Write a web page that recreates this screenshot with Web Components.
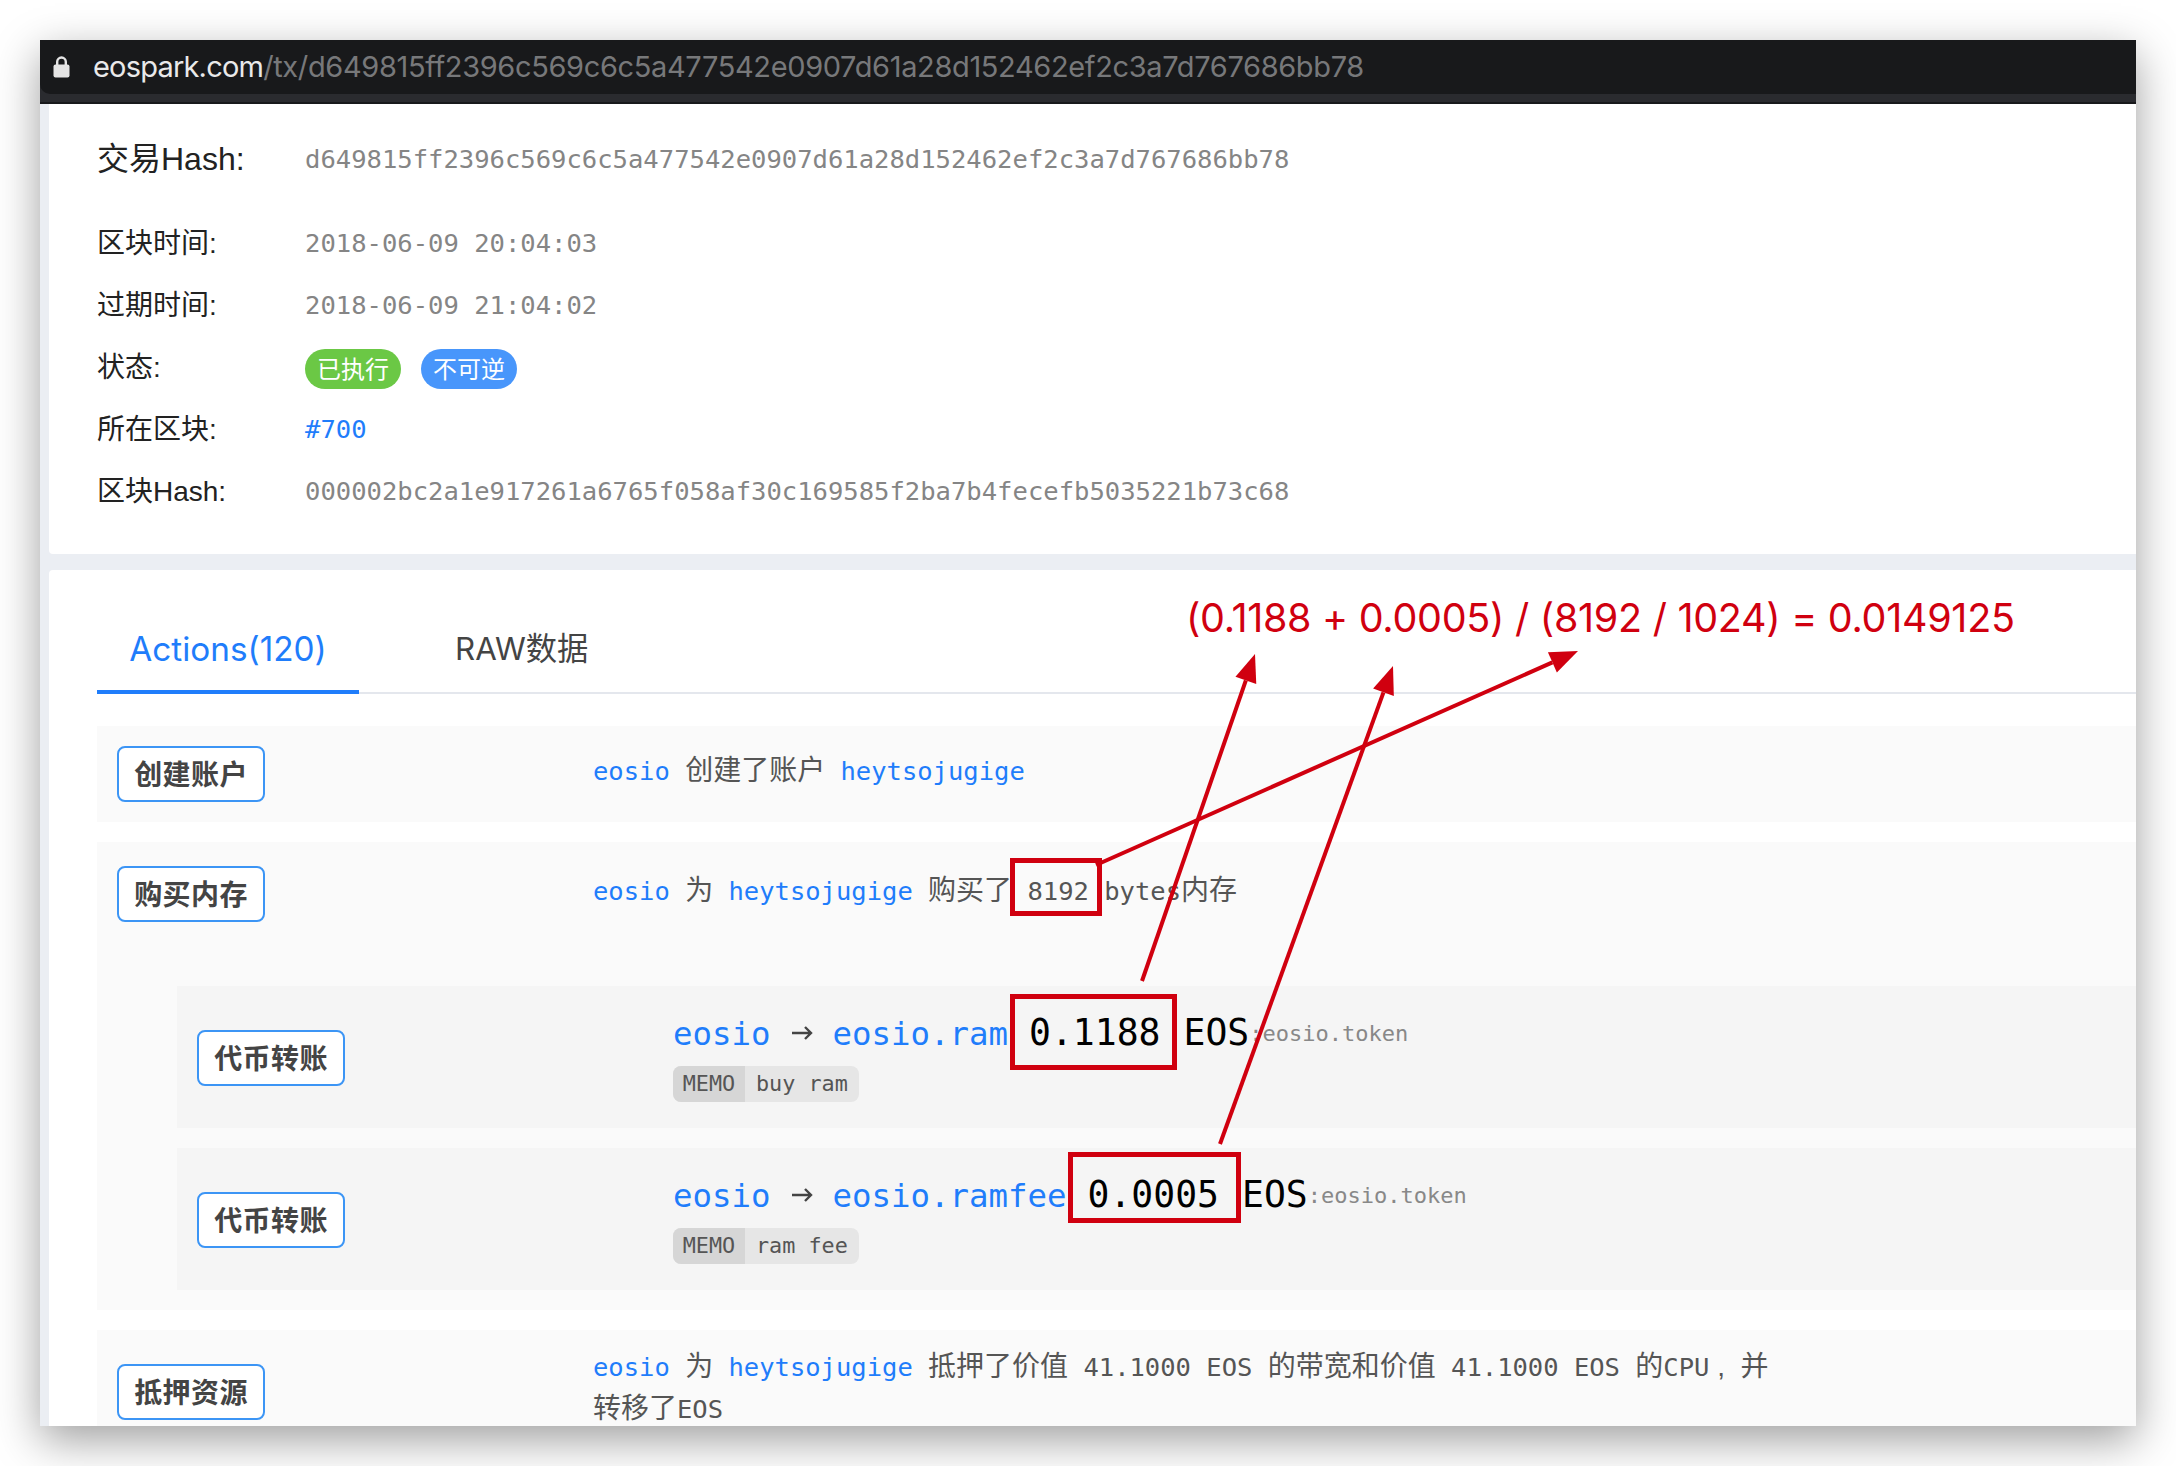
<!DOCTYPE html>
<html>
<head>
<meta charset="utf-8">
<style>
html, body { margin: 0; height: 1466px; overflow: hidden; background: #fff; }
body { padding: 40px; box-sizing: border-box; font-family: "Liberation Sans", "Noto Sans CJK SC", sans-serif; }
</style>
</head>
<body>
<browser-window>
    <url-bar slot="bar" host="eospark.com" path="/tx/d649815ff2396c569c6c5a477542e0907d61a28d152462ef2c3a7d767686bb78"></url-bar>

    <info-card>
        <info-row label="交易Hash:" big>d649815ff2396c569c6c5a477542e0907d61a28d152462ef2c3a7d767686bb78</info-row>
        <info-row label="区块时间:">2018-06-09 20:04:03</info-row>
        <info-row label="过期时间:">2018-06-09 21:04:02</info-row>
        <info-row label="状态:"><status-pill color="#6bc845">已执行</status-pill><status-pill color="#4896fb">不可逆</status-pill></info-row>
        <info-row label="所在区块:"><eos-link>#700</eos-link></info-row>
        <info-row label="区块Hash:">000002bc2a1e917261a6765f058af30c169585f2ba7b4fecefb5035221b73c68</info-row>
    </info-card>

    <actions-card>
        <tab-bar slot="tabs" active="Actions(120)" other="RAW数据"></tab-bar>

        <action-row tag="创建账户">
            <eos-link>eosio</eos-link> <zh-t>创建了账户</zh-t> <eos-link>heytsojugige</eos-link>
        </action-row>

        <action-row tag="购买内存" parent>
            <eos-link>eosio</eos-link> <zh-t>为</zh-t> <eos-link>heytsojugige</eos-link> <zh-t>购买了</zh-t> 8192 bytes<zh-t>内存</zh-t>
            <transfer-row slot="children" from="eosio" to="eosio.ram" amount="0.1188" memo="buy ram"></transfer-row>
            <transfer-row slot="children" from="eosio" to="eosio.ramfee" amount="0.0005" memo="ram fee"></transfer-row>
        </action-row>

        <action-row tag="抵押资源" wrap>
            <eos-link>eosio</eos-link> <zh-t>为</zh-t> <eos-link>heytsojugige</eos-link> <zh-t>抵押了价值</zh-t> 41.1000 EOS <zh-t>的带宽和价值</zh-t> 41.1000 EOS <zh-t>的</zh-t>CPU<zh-t> , &nbsp;并</zh-t><br><zh-t>转移了</zh-t>EOS
        </action-row>
    </actions-card>

    <red-notes slot="notes"></red-notes>
</browser-window>

<script>
const MONO = '"DejaVu Sans Mono", "Noto Sans CJK SC", monospace';
const SANS = '"Liberation Sans", "Noto Sans CJK SC", sans-serif';

// small helper so every element is the same few lines
function shadow(el, html) {
    const root = el.attachShadow({mode: 'open'});
    root.innerHTML = html;
    return root;
}

customElements.define('browser-window', class extends HTMLElement {
    connectedCallback() {
        shadow(this, `<style>
            :host { display: block; position: relative; width: 2096px; height: 1386px; overflow: visible;
                box-shadow: 0 14px 42px rgba(0,0,0,.38); background: #ebeef3; }
            .clip { position: absolute; inset: 0; overflow: hidden; display: flex; flex-direction: column; }
            .page { flex: 1; min-height: 0; padding-left: 9px; display: flex; flex-direction: column; gap: 16px; }
        </style>
        <div class="clip">
            <slot name="bar"></slot>
            <div class="page"><slot></slot></div>
        </div>
        <slot name="notes"></slot>`);
    }
});

customElements.define('url-bar', class extends HTMLElement {
    connectedCallback() {
        shadow(this, `<style>
            :host { display: block; flex: none; height: 64px; box-sizing: border-box;
                background: #2a2b2f; border-bottom: 2px solid #18191b; }
            .in { display: flex; align-items: center; height: 54px; box-sizing: border-box; padding-left: 13px;
                background: #18191b; border-bottom-left-radius: 10px; font: 29px Inter, ${SANS}; }
            svg { flex: none; width: 17px; height: 22px; margin-right: 23px; }
            b { font-weight: 400; color: #e9e9ea; letter-spacing: -.8px; }
            span { color: #77787a; }
            .url { letter-spacing: -.36px; white-space: nowrap; margin-top: -2px; }
        </style>
        <div class="in">
            <svg viewBox="0 0 17 22"><path fill="none" stroke="#e4e4e4" stroke-width="2.4" d="M4.2 9V5.8a4.3 4.3 0 0 1 8.6 0V9"/><rect x="0.5" y="8.5" width="16" height="13" rx="2" fill="#e4e4e4"/></svg>
            <div class="url"><b>${this.getAttribute('host')}</b><span>${this.getAttribute('path')}</span></div>
        </div>`);
    }
});

customElements.define('info-card', class extends HTMLElement {
    connectedCallback() {
        shadow(this, `<style>
            :host { display: flex; flex-direction: column; flex: none; height: 450px; box-sizing: border-box;
                padding: 24px 0 0 49px; background: #fff; border-bottom-left-radius: 4px; }
        </style><slot></slot>`);
    }
});

customElements.define('info-row', class extends HTMLElement {
    connectedCallback() {
        const big = this.hasAttribute('big');
        shadow(this, `<style>
            :host { display: grid; grid-template-columns: 207px 1fr; align-items: center; height: 62px;
                margin-bottom: ${big ? 22 : 0}px; color: #858585; font: 25.56px ${MONO}; white-space: pre; }
            .l { color: #222; font: ${big ? 32 : 28}px ${SANS}; margin-top: ${big ? -7 : -4}px; margin-left: -1px; }
            .v { display: flex; align-items: center; gap: 20px; }
        </style><div class="l">${this.getAttribute('label')}</div><div class="v"><slot></slot></div>`);
    }
});

customElements.define('status-pill', class extends HTMLElement {
    connectedCallback() {
        shadow(this, `<style>
            :host { display: flex; align-items: center; justify-content: center; width: 96px; height: 40px; margin-top: 4px;
                box-sizing: border-box; padding-bottom: 4px;
                border-radius: 20px; color: #fff; background: ${this.getAttribute('color')}; font: 24px ${SANS}; }
        </style><slot></slot>`);
    }
});

customElements.define('eos-link', class extends HTMLElement {
    connectedCallback() {
        shadow(this, `<style>:host { color: #1f7dfb; }</style><slot></slot>`);
    }
});

customElements.define('zh-t', class extends HTMLElement {
    connectedCallback() {
        shadow(this, `<style>:host { font-family: ${SANS}; font-size: 28px; }</style><slot></slot>`);
    }
});

customElements.define('actions-card', class extends HTMLElement {
    connectedCallback() {
        shadow(this, `<style>
            :host { display: block; flex: 1; background: #fff; padding-left: 48px; border-top-left-radius: 4px; }
            .rows { display: flex; flex-direction: column; gap: 20px; padding-top: 32px; }
        </style><slot name="tabs"></slot><div class="rows"><slot></slot></div>`);
    }
});

customElements.define('tab-bar', class extends HTMLElement {
    connectedCallback() {
        shadow(this, `<style>
            :host { display: flex; height: 124px; box-sizing: border-box; border-bottom: 2px solid #e4e7ed; }
            div { display: flex; align-items: center; height: 124px; box-sizing: border-box; font: 33.3px Inter, ${SANS}; }
            .on { width: 262px; justify-content: center; padding-top: 37px; color: #1f7dfb; border-bottom: 4px solid #1f7dfb; }
            .off { margin-left: 96px; color: #444; font-size: 31.3px; padding-top: 29px; }
        </style><div class="on">${this.getAttribute('active')}</div><div class="off">${this.getAttribute('other')}</div>`);
    }
});

customElements.define('tag-box', class extends HTMLElement {
    connectedCallback() {
        shadow(this, `<style>
            :host { display: flex; align-items: center; justify-content: center; width: 148px; height: 56px; box-sizing: border-box;
                padding-bottom: 2px; border: 2px solid #3c95f5; border-radius: 8px; background: #fff; color: #444;
                font: 700 28px ${SANS}; letter-spacing: .4px; }
        </style><slot></slot>`);
    }
});

customElements.define('action-row', class extends HTMLElement {
    connectedCallback() {
        const parent = this.hasAttribute('parent'), wrap = this.hasAttribute('wrap');
        const pad = parent ? 24 : wrap ? 16 : 20;
        shadow(this, `<style>
            :host { display: block; background: #fafafa; flex: none; }
            .head { display: grid; grid-template-columns: 477px 1fr; align-items: center; padding: ${pad}px 20px; min-height: 56px;
                color: #555; font: 25.5px/42px ${MONO}; }
            .txt { padding-bottom: ${wrap ? 8 : 6}px; margin-left: -1px; }
            .kids { display: ${parent ? 'flex' : 'none'}; flex-direction: column; gap: 20px; padding: 40px 0 20px 80px; }
        </style>
        <div class="head"><tag-box>${this.getAttribute('tag')}</tag-box><div class="txt"><slot></slot></div></div>
        <div class="kids"><slot name="children"></slot></div>`);
    }
});

customElements.define('transfer-row', class extends HTMLElement {
    connectedCallback() {
        const a = n => this.getAttribute(n);
        shadow(this, `<style>
            :host { display: grid; grid-template-columns: 476px 1fr; align-items: center; height: 142px; padding-left: 20px; background: #f5f5f5; }
            tag-box { margin-top: 2px; }
            .line { display: flex; align-items: baseline; height: 42px; white-space: pre; font: 32.4px/42px ${MONO}; color: #1f7dfb; }
            .arrow { width: 22px; height: 20px; margin: 0 20px; align-self: center; }
            .amt { font-size: 36.4px; color: #000; margin-left: 21px; }
            .sym { font-size: 36.4px; color: #000; margin-left: 23px; }
            .token { font-size: 22px; line-height: 42px; color: #888; position: relative; top: -4px; }
            .memo { display: inline-flex; height: 36px; margin-top: 12px; border-radius: 8px; overflow: hidden; background: #e6e6e6; color: #555; font: 21.8px/36px ${MONO}; }
            .memo b { font-weight: 400; width: 72px; text-align: center; background: #d6d6d6; }
            .memo span { padding: 0 11px 0 11px; }
        </style>
        <tag-box>代币转账</tag-box>
        <div>
            <div class="line"><span>${a('from')}</span><svg class="arrow" viewBox="0 0 22 20"><path fill="none" stroke="#444" stroke-width="2.4" d="M1 10H20M14 4L20 10L14 16"/></svg><span>${a('to')}</span><span class="amt">${a('amount')}</span><span class="sym">EOS</span><span class="token">:eosio.token</span></div>
            <div class="memo"><b>MEMO</b><span>${a('memo')}</span></div>
        </div>`);
    }
});

// the red marks are drawn over the screenshot, so they sit on their own free layer
customElements.define('red-notes', class extends HTMLElement {
    connectedCallback() {
        const boxes = [[1010,858,92,58],[1010,994,167,76],[1068,1152,173,71]];
        const arrows = [[1142,981,1255,654],[1220,1144,1393,666],[1096,865,1578,651]];
        const marks = arrows.map(([x1, y1, x2, y2]) => {
            const t = Math.atan2(y2 - y1, x2 - x1), L = 28, W = 11;
            const bx = x2 - L * Math.cos(t), by = y2 - L * Math.sin(t);
            const nx = -Math.sin(t) * W, ny = Math.cos(t) * W;
            return `<line x1="${x1}" y1="${y1}" x2="${bx}" y2="${by}" stroke-width="4" stroke="#d0000f"/>
                <polygon fill="#d0000f" points="${x2},${y2} ${bx + nx},${by + ny} ${bx - nx},${by - ny}"/>`;
        }).join('');
        shadow(this, `<style>
            :host { position: absolute; left: -40px; top: -40px; width: 2176px; height: 1466px; pointer-events: none; }
            svg { position: absolute; inset: 0; }
            div { position: absolute; left: 1186px; top: 596px; color: #d0000f; font: 39.5px/44px Inter, ${SANS}; letter-spacing: -.29px; white-space: nowrap; }
        </style>
        <svg width="2176" height="1466" viewBox="0 0 2176 1466">
            ${boxes.map(([x, y, w, h]) => `<rect x="${x + 2.5}" y="${y + 2.5}" width="${w - 5}" height="${h - 5}" fill="none" stroke="#d0000f" stroke-width="5"/>`).join('')}
            ${marks}
        </svg>
        <div>(0.1188 + 0.0005) / (8192 / 1024) = 0.0149125</div>`);
    }
});
</script>
</body>
</html>
